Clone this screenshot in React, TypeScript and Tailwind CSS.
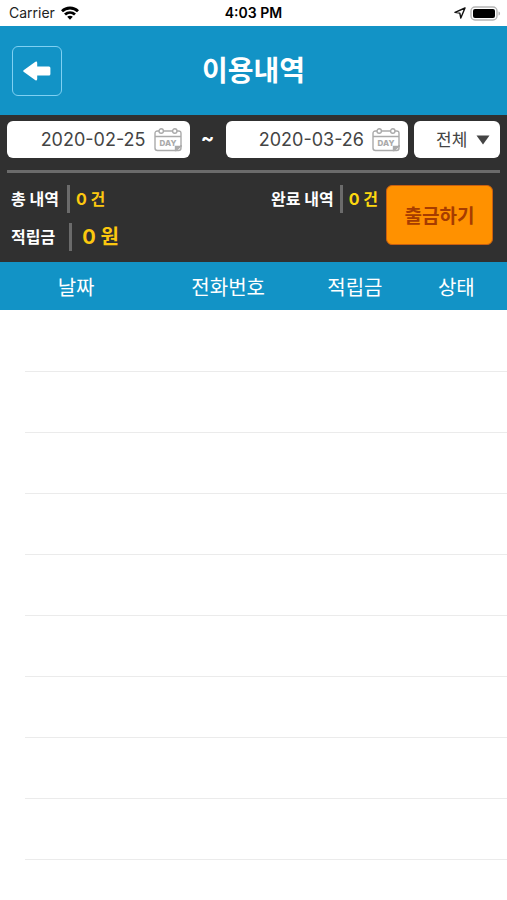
import { useState } from "react";

type Usage = {
  id: string;
  date: string;
  phone: string;
  reward: string;
  status: string;
};

const COLUMNS = [
  { label: "날짜", width: "w-[30%]" },
  { label: "전화번호", width: "w-[30%]" },
  { label: "적립금", width: "w-[20%]" },
  { label: "상태", width: "w-[20%]" },
];

const STATUS_OPTIONS = ["전체", "대기", "완료"];

const EMPTY_ROWS = 9;

function StatusBar() {
  return (
    <div className="grid h-[26px] grid-cols-3 items-center bg-white text-sm text-black">
      <div className="flex items-center gap-1.5 pl-[9px] text-[#222]">
        Carrier
        <svg viewBox="0 0 18 14" className="h-3.5 w-[18px]" fill="none" stroke="#000" strokeWidth="2.8" aria-hidden="true">
          <path d="M1 5.2C5.4 .9 12.6 .9 17 5.2" />
          <path d="M4 8.6C6.9 5.9 11.1 5.9 14 8.6" />
          <path d="M6.2 10.8C7.8 9.4 10.2 9.4 11.8 10.8L9 13.7Z" fill="#000" stroke="none" />
        </svg>
      </div>
      <div className="text-center font-semibold">4:03 PM</div>
      <div className="flex items-center justify-end gap-1 pr-1.5">
        <svg viewBox="0 0 12 12" className="h-3 w-3" fill="none" stroke="#111" strokeWidth="1.4" strokeLinejoin="round" aria-hidden="true">
          <path d="M11 1L1 5.4L5.8 6.1L6.8 11Z" />
        </svg>
        <svg viewBox="0 0 31 15" className="h-[15px] w-[31px]" aria-hidden="true">
          <rect x="1" y="1" width="26" height="13" rx="4" fill="#fff" stroke="#b5b5b5" strokeWidth="1.4" />
          <rect x="3" y="3" width="22" height="9" rx="2" fill="#000" />
          <path d="M28.5 5.5C30.6 6 30.6 9 28.5 9.5Z" fill="#b5b5b5" />
        </svg>
      </div>
    </div>
  );
}

function CalendarIcon() {
  return (
    <svg viewBox="0 0 28 24" className="h-6 w-7 shrink-0" fill="none" stroke="#aaa" strokeWidth="1.4" aria-hidden="true">
      <path d="M5 3H3.5Q1 3 1 5.5V20Q1 22.5 3.5 22.5H22L27 18V5.5Q27 3 24.5 3H23M9.5 3H18.5M1 8.5H27" />
      <path d="M27 17V20Q27 22.5 24.5 22.5H21" />
      <path d="M21.5 22V18.5H26.5Z" fill="#aaa" />
      <circle cx="7.2" cy="3" r="2.2" />
      <circle cx="20.8" cy="3" r="2.2" />
      <text x="14" y="18" textAnchor="middle" fontSize="8" fontWeight="800" fill="#aaa" stroke="none">
        DAY
      </text>
    </svg>
  );
}

function DateField({ label, value, onChange }: { label: string; value: string; onChange: (v: string) => void }) {
  return (
    <label className="flex h-[37px] min-w-0 flex-1 items-center rounded-md bg-white pr-2">
      <input
        type="text"
        aria-label={label}
        value={value}
        onChange={(e) => onChange(e.target.value)}
        className="w-full min-w-0 flex-1 bg-transparent pr-2 text-right text-lg text-[#444] outline-none"
      />
      <CalendarIcon />
    </label>
  );
}

export default function App() {
  const [from, setFrom] = useState("2020-02-25");
  const [to, setTo] = useState("2020-03-26");
  const [status, setStatus] = useState(STATUS_OPTIONS[0]);
  const [items] = useState<Usage[]>([]);

  return (
    <div className="min-h-screen bg-white font-[Inter,'Noto_Sans_CJK_KR',sans-serif]">
      <StatusBar />

      <header className="grid h-[89px] grid-cols-[50px_1fr_50px] items-center bg-[#1293c6] px-3">
        <button
          type="button"
          aria-label="뒤로"
          className="flex h-[50px] w-[50px] items-center justify-center rounded-md border border-[#7fd0f2]"
        >
          <svg viewBox="0 0 28 20" className="h-5 w-7" fill="#fff" aria-hidden="true">
            <path d="M.6 9.2L12.4 .8Q14.2 0 14.2 2V5.5H26Q27.4 5.5 27.4 7V13Q27.4 14.5 26 14.5H14.2V18Q14.2 20 12.4 19.2L.6 10.8Q-.2 10 .6 9.2Z" />
          </svg>
        </button>
        <h1 className="text-center text-[28px] font-bold text-white">이용내역</h1>
      </header>

      <section className="bg-[#303030] px-[7px] pt-1.5 pb-[11px]">
        <div className="flex items-center">
          <DateField label="시작일" value={from} onChange={setFrom} />
          <span className="w-9 pb-1 text-center text-xl font-bold text-white">~</span>
          <DateField label="종료일" value={to} onChange={setTo} />
          <div className="relative ml-1.5 w-[86px]">
            <select
              aria-label="상태 선택"
              value={status}
              onChange={(e) => setStatus(e.target.value)}
              className="h-[37px] w-full appearance-none rounded-md bg-white pt-0.5 pl-[22px] text-[17px] text-[#444] outline-none"
            >
              {STATUS_OPTIONS.map((option) => (
                <option key={option}>{option}</option>
              ))}
            </select>
            <svg viewBox="0 0 14 10" className="pointer-events-none absolute top-3.5 right-2.5 h-2.5 w-3.5" fill="#444" aria-hidden="true">
              <path d="M.5 .5H13.5L7 9.5Z" />
            </svg>
          </div>
        </div>

        <hr className="mt-3 h-[3px] border-0 bg-[#6b6b6b]" />

        <div className="mt-3 flex justify-between text-base font-bold text-white">
          <div className="flex flex-col gap-2.5 pl-1">
            <div className="flex h-7 items-center">
              총 내역
              <span className="mr-1.5 ml-2 h-7 w-[3px] bg-[#6b6b6b]" />
              <span className="text-[#fcc80f]">0 건</span>
            </div>
            <div className="flex h-7 items-center">
              적립금
              <span className="mr-2.5 ml-3.5 h-7 w-[3px] bg-[#6b6b6b]" />
              <span className="text-xl text-[#fcc80f]">0 원</span>
            </div>
          </div>
          <div className="flex gap-2 pr-[7px]">
            <div className="flex h-7 items-center gap-1.5">
              완료 내역
              <span className="h-7 w-[3px] bg-[#6b6b6b]" />
              <span className="text-[#fcd80f]">0 건</span>
            </div>
            <button
              type="button"
              className="h-[60px] w-[107px] rounded-md border border-[#c95f10] bg-[#ff9100] pt-1 text-[19px] font-bold text-[#a63c00]"
            >
              출금하기
            </button>
          </div>
        </div>
      </section>

      <table className="w-full table-fixed">
        <thead>
          <tr className="h-12 bg-[#1293c6] text-xl text-white">
            {COLUMNS.map((column) => (
              <th key={column.label} scope="col" className={`pt-1 font-normal ${column.width}`}>
                {column.label}
              </th>
            ))}
          </tr>
        </thead>
        <tbody>
          {items.map((item) => (
            <tr key={item.id} className="h-[61px] border-b border-[#ebebeb] text-center text-base">
              <td>{item.date}</td>
              <td>{item.phone}</td>
              <td>{item.reward}</td>
              <td>{item.status}</td>
            </tr>
          ))}
        </tbody>
      </table>

      {items.length === 0 && (
        <div className="pt-px pl-[25px]">
          {[...Array(EMPTY_ROWS)].map((_, i) => (
            <div key={i} className="h-[61px] border-b border-[#ebebeb]" />
          ))}
        </div>
      )}
    </div>
  );
}
